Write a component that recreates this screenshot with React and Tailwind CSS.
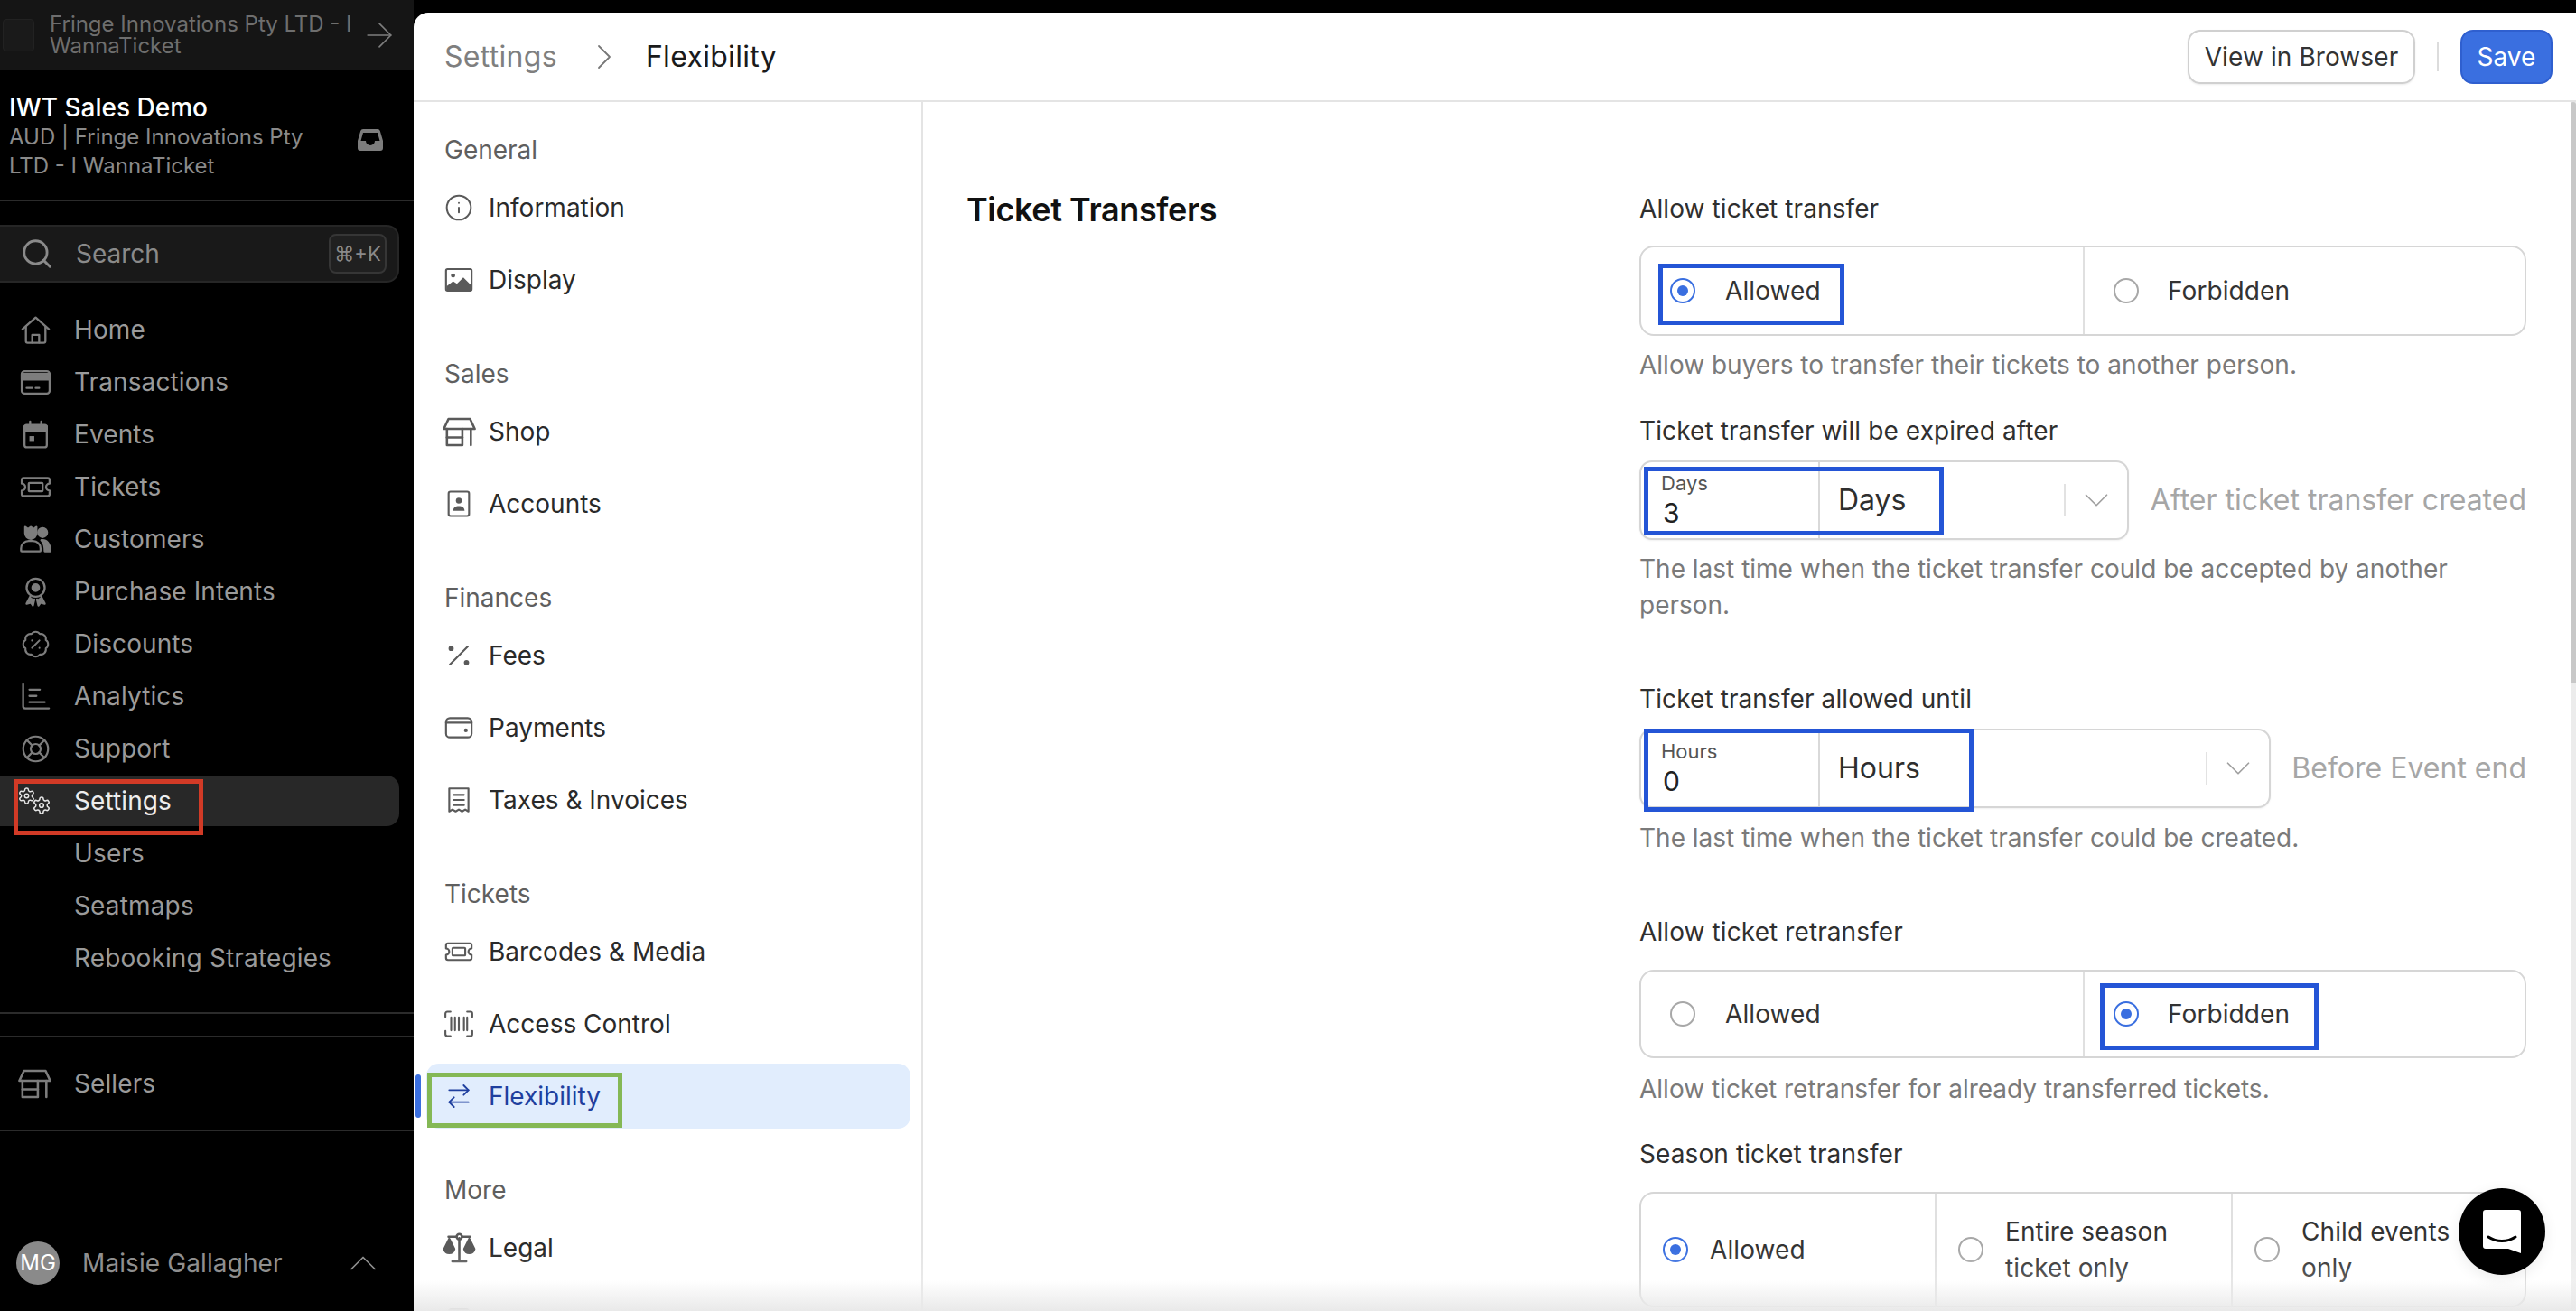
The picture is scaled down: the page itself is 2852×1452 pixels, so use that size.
import React from "react";
import { ArrowRight, Search, ChevronUp, ChevronRight, ChevronDown, BadgePercent, LifeBuoy, ArrowRightLeft, Info } from "lucide-react";

const S = ({ size = 34, children, className = "", sw = 1.5 }) => (
  <svg width={size} height={size} viewBox="0 0 24 24" fill="none" stroke="currentColor" strokeWidth={sw} strokeLinecap="round" strokeLinejoin="round" className={"shrink-0 " + className}>{children}</svg>
);

const GEAR = "M12.22 2h-.44a2 2 0 0 0-2 2v.18a2 2 0 0 1-1 1.73l-.43.25a2 2 0 0 1-2 0l-.15-.08a2 2 0 0 0-2.73.73l-.22.38a2 2 0 0 0 .73 2.73l.15.1a2 2 0 0 1 1 1.72v.51a2 2 0 0 1-1 1.74l-.15.09a2 2 0 0 0-.73 2.73l.22.38a2 2 0 0 0 2.73.73l.15-.08a2 2 0 0 1 2 0l.43.25a2 2 0 0 1 1 1.73V20a2 2 0 0 0 2 2h.44a2 2 0 0 0 2-2v-.18a2 2 0 0 1 1-1.73l.43-.25a2 2 0 0 1 2 0l.15.08a2 2 0 0 0 2.73-.73l.22-.39a2 2 0 0 0-.73-2.73l-.15-.08a2 2 0 0 1-1-1.74v-.5a2 2 0 0 1 1-1.74l.15-.09a2 2 0 0 0 .73-2.73l-.22-.38a2 2 0 0 0-2.73-.73l-.15.08a2 2 0 0 1-2 0l-.43-.25a2 2 0 0 1-1-1.73V4a2 2 0 0 0-2-2z";

const HomeI = (p) => <S {...p}><path d="M2.500 11.500 12 3l9.500 8.500" /><path d="M5 9.500V20a1.200 1.200 0 0 0 1.200 1.200h11.600A1.200 1.200 0 0 0 19 20V9.500" /><path d="M9.500 21v-5.500h5V21" /></S>;
const CardI = (p) => <S {...p}><rect x="2" y="4" width="20" height="16" rx="2" /><path d="M2 6h20v4H2z" fill="currentColor" /><path d="M5.500 16h4M12 16h2.500" /></S>;
const CalI = (p) => <S {...p}><rect x="4" y="5" width="16" height="16" rx="1.600" /><path d="M4 6h16v3.500H4z" fill="currentColor" /><path d="M8 2.500V5M16 2.500V5" /><rect x="7.500" y="13" width="3.500" height="3.500" fill="currentColor" stroke="none" /></S>;
const TicketI = (p) => <S {...p}><path d="M3.500 5.500h17a1.500 1.500 0 0 1 1.500 1.500v2.500a2.500 2.500 0 0 0 0 5V17a1.500 1.500 0 0 1-1.500 1.500h-17A1.500 1.500 0 0 1 2 17v-2.500a2.500 2.500 0 0 0 0-5V7a1.500 1.500 0 0 1 1.500-1.500z" /><rect x="7" y="9" width="10" height="6" rx="0.600" /></S>;
const CustomersI = (p) => <S {...p}><path d="M4.500 3l2 1.500L8.500 3l2 1.500L12.500 3v4.500a4 4 0 0 1-8 0z" fill="currentColor" /><path d="M1.500 20v-1.500A5.500 5.500 0 0 1 7 13h3a5.500 5.500 0 0 1 5.500 5.500V20a.5.5 0 0 1-.5.5H2a.5.5 0 0 1-.5-.5z" /><circle cx="17" cy="7" r="3.200" fill="currentColor" /><path d="M16 12.500c4 -.5 6.500 2.500 6.500 8h-4c0-3-.5-6-2.500-8z" fill="currentColor" /></S>;
const RosetteI = (p) => <S {...p}><circle cx="12" cy="9" r="6.500" /><circle cx="12" cy="9" r="2.400" fill="currentColor" /><path d="M8 15.500l-2.500 5 3-.8 1.500 2 1-4.200M16 15.500l2.500 5-3-.8-1.500 2-1-4.200" fill="currentColor" /></S>;
const ChartI = (p) => <S {...p}><path d="M3 3v16a1.500 1.500 0 0 0 1.500 1.500H21.500" /><path d="M7.500 7h7.500M7.500 11.500h5M7.500 16h11" /></S>;
const GearsI = () => (
  <svg width="36" height="30" viewBox="0 0 36 30" fill="none" stroke="currentColor" strokeWidth="1.700" strokeLinejoin="round" className="shrink-0 overflow-visible">
    <g transform="translate(-0.700,-0.700) scale(0.85)"><path d={GEAR} /><circle cx="12" cy="12" r="2.600" /></g>
    <g transform="translate(15.200,9.200) scale(0.9)"><path d={GEAR} /><circle cx="12" cy="12" r="2.600" /></g>
  </svg>
);
const StoreI = () => <S size={41}><path d="M5 3.500h14l3 6.500H2z" /><path d="M4 10v10.500h10V10M19.500 10v10.500" /><path d="M4 15.500h10" /></S>;
const ImageI = (p) => <S {...p}><rect x="2" y="3.500" width="20" height="17" rx="1.200" /><circle cx="7.500" cy="8.500" r="1.700" fill="currentColor" stroke="none" /><path d="M2.500 20v-3l5-4 3 2 5-5 6 6v4z" fill="currentColor" stroke="none" /></S>;
const AccountI = (p) => <S {...p}><rect x="4" y="2.500" width="16" height="19" rx="1.500" /><circle cx="12" cy="9.500" r="2.300" fill="currentColor" stroke="none" /><path d="M7.500 17.500c0-2.500 2-3.800 4.500-3.800s4.500 1.300 4.500 3.800z" fill="currentColor" stroke="none" /></S>;
const FeesI = (p) => <S {...p}><path d="M19 5 5 19" /><circle cx="6" cy="6.500" r="1.300" fill="currentColor" /><circle cx="18" cy="17.500" r="1.300" fill="currentColor" /></S>;
const WalletI = (p) => <S {...p}><rect x="2" y="4.500" width="20" height="15" rx="3" /><path d="M2 8h20" /><circle cx="17.500" cy="14" r="0.800" fill="currentColor" /></S>;
const ReceiptI = (p) => <S {...p}><path d="M4.500 3h15v18l-2.500-1.500-2.500 1.500-2.500-1.500L9.500 21 7 19.500 4.500 21z" /><path d="M8 8h8M8 12h8M8 16h8" /></S>;
const ScanI = (p) => <S {...p}><path d="M1.500 6.500V4A1.500 1.500 0 0 1 3 2.500h2.500M18.500 2.500H21A1.500 1.500 0 0 1 22.500 4v2.500M22.500 17.500V20a1.500 1.500 0 0 1-1.500 1.500h-2.500M5.500 21.500H3A1.500 1.500 0 0 1 1.500 20v-2.500" /><path d="M6 7v10M9 7v10M12 7v10M16 7v10M18.500 7v10" /></S>;
const ScaleI = () => (
  <S size={41}>
    <path d="M12 5.500V20M5 4.500h4.800M14.200 4.500H19M7.500 20.500h9" />
    <circle cx="12" cy="4.500" r="1.700" />
    <path d="M5.500 6 2.300 12.500a3.300 3.300 0 0 0 6.400 0z" fill="currentColor" />
    <path d="M18.500 6l-3.200 6.500a3.300 3.300 0 0 0 6.400 0z" fill="currentColor" />
  </S>
);
const InboxFill = () => (
  <svg width="28" height="24" viewBox="0 0 28 24" className="shrink-0"><path fillRule="evenodd" fill="#7d7d7d" d="M6 0h16a3 3 0 0 1 2.800 2L28 13v8a3 3 0 0 1-3 3H3a3 3 0 0 1-3-3v-8L3.200 2A3 3 0 0 1 6 0zM6 4l-2.500 9h5.500a5 5 0 0 0 10 0h5.500L22 4z" /></svg>
);

const sideItems = [
  [HomeI, "Home"], [CardI, "Transactions"], [CalI, "Events"], [TicketI, "Tickets"],
  [CustomersI, "Customers"], [RosetteI, "Purchase Intents"],
  [() => <BadgePercent size={33} strokeWidth={1.5} />, "Discounts"], [ChartI, "Analytics"],
  [() => <LifeBuoy size={33} strokeWidth={1.6} />, "Support"],
];

function SideRow({ Icon, label }) {
  return (
    <div className="h-[58px] flex items-center pl-[15px] text-[#9a9a9a]">
      <div className="w-[48px] mr-[19px] flex justify-center text-[#7d7d7d] shrink-0"><Icon size={37} /></div>
      <span className="text-[28px] leading-[36px] tracking-[0.1px]">{label}</span>
    </div>
  );
}

function Sidebar() {
  return (
    <aside className="w-[458px] shrink-0 h-full bg-black flex flex-col overflow-hidden">
      <div className="h-[78px] bg-[#151515] flex items-center pl-[3px] pr-[16px] shrink-0">
        <div className="w-[35px] h-[36px] rounded-[4px] bg-[#1a1a1a] border border-[#222] shrink-0" />
        <div className="ml-[17px] flex-1 text-[24px] leading-[24px] text-[#6e6e6e] whitespace-nowrap">Fringe Innovations Pty LTD - I<br />WannaTicket</div>
        <ArrowRight size={44} strokeWidth={0.9} className="text-[#7d7d7d] shrink-0" />
      </div>
      <div className="h-[145px] shrink-0 border-b-2 border-[#2b2b2b] pl-[10px] pr-[34px] pt-[24px] flex items-center justify-between pb-[22px]">
        <div>
          <div className="text-[28px] leading-[34px] font-medium text-white">IWT Sales Demo</div>
          <div className="text-[24px] leading-[32px] text-[#8a8a8a] w-[340px]">AUD | Fringe Innovations Pty LTD - I WannaTicket</div>
        </div>
        <div className="mt-[8px]"><InboxFill /></div>
      </div>
      <div className="pr-[16px] pt-[26px] shrink-0">
        <div className="h-[64px] rounded-r-[14px] bg-[#191919] border-2 border-l-0 border-[#262626] flex items-center pl-[22px] pr-[12px]">
          <Search size={38} strokeWidth={1.8} className="text-[#8a8a8a]" />
          <span className="ml-[24px] flex-1 text-[28px] text-[#8a8a8a]">Search</span>
          <div className="w-[64px] h-[44px] rounded-[8px] border-2 border-[#363636] bg-[#202020] flex items-center justify-center text-[22px] text-[#8a8a8a] whitespace-nowrap">⌘+K</div>
        </div>
      </div>
      <div className="pt-[23px] shrink-0">
        {sideItems.map(([I, l]) => <SideRow key={l} Icon={I} label={l} />)}
        <div className="relative mr-[16px] pl-[20px] bg-[#282828] rounded-r-[14px] h-[56px] my-[1px] flex items-center">
          <div className="w-[62px] shrink-0 text-[#e6e6e6]"><GearsI /></div>
          <span className="text-[28px] text-[#ededed] leading-[36px] tracking-[0.1px]">Settings</span>
          <div className="absolute left-[15px] top-[4px] w-[210px] h-[62px] border-[5px] border-[#d13a26]" />
        </div>
        {["Users", "Seatmaps", "Rebooking Strategies"].map((l) => (
          <div key={l} className="h-[58px] flex items-center pl-[82px] text-[28px] text-[#9a9a9a] tracking-[0.15px]">{l}</div>
        ))}
      </div>
      <div className="mt-[31px] h-[28px] border-y-2 border-[#2b2b2b] shrink-0" />
      <div className="h-[104px] border-b-2 border-[#2b2b2b] pl-[18px] flex items-center shrink-0">
        <div className="w-[64px] shrink-0 text-[#7d7d7d]"><StoreI /></div>
        <span className="text-[28px] text-[#9a9a9a] tracking-[0.1px]">Sellers</span>
      </div>
      <div className="flex-1 flex items-end pb-[29px] pl-[18px]">
        <div className="w-[48px] h-[48px] rounded-full bg-[#8a8a8a] text-white text-[24px] flex items-center justify-center shrink-0">MG</div>
        <div className="ml-[25px] h-[48px] flex items-center w-[285px] text-[28px] text-[#8f8f8f] tracking-[0.1px]">Maisie Gallagher</div>
        <div className="h-[48px] flex items-center"><ChevronUp size={52} strokeWidth={0.8} className="text-[#8f8f8f]" /></div>
      </div>
    </aside>
  );
}

function NavRow({ Icon, label }) {
  return (
    <div className="h-[80px] flex items-center">
      <div className="w-[32px] mr-[17px] text-[#5a5a5a] flex justify-center"><Icon size={34} /></div>
      <span className="text-[28px] text-[#2a2a2a]">{label}</span>
    </div>
  );
}

const NavHead = ({ children, className = "" }) => <div className={"text-[28px] leading-[36px] text-[#5f5f5f] " + className}>{children}</div>;

function SettingsNav() {
  const Info34 = () => <Info size={34} strokeWidth={1.500} />;
  return (
    <nav className="relative w-[564px] shrink-0 h-full border-r-2 border-[#e4e4e4] pl-[34px] pt-[35px] overflow-hidden">
      <NavHead>General</NavHead>
      <div className="mt-[6px]"><NavRow Icon={Info34} label="Information" /><NavRow Icon={ImageI} label="Display" /></div>
      <NavHead className="mt-[46px]">Sales</NavHead>
      <div className="mt-[6px]"><NavRow Icon={StoreI} label="Shop" /><NavRow Icon={AccountI} label="Accounts" /></div>
      <NavHead className="mt-[46px]">Finances</NavHead>
      <div className="mt-[6px]"><NavRow Icon={FeesI} label="Fees" /><NavRow Icon={WalletI} label="Payments" /><NavRow Icon={ReceiptI} label="Taxes & Invoices" /></div>
      <NavHead className="mt-[46px]">Tickets</NavHead>
      <div className="mt-[6px]"><NavRow Icon={TicketI} label="Barcodes & Media" /><NavRow Icon={ScanI} label="Access Control" /></div>
      <div className="relative -ml-[20px] mr-[12px] h-[72px] mt-[4px] rounded-[14px] bg-[#e1edfd] flex items-center pl-[20px] text-[#1f3f9e]">
        <div className="w-[32px] mr-[17px] flex justify-center"><ArrowRightLeft size={36} strokeWidth={1.4} /></div>
        <span className="text-[28px]">Flexibility</span>
        <div className="absolute -left-[12px] top-[12px] w-[6px] h-[48px] rounded-full bg-[#3a6fe0]" />
        <div className="absolute left-[1px] top-[10px] w-[216px] h-[61px] border-[5px] border-[#84b855]" />
      </div>
      <NavHead className="mt-[50px]">More</NavHead>
      <div className="mt-[6px]"><NavRow Icon={ScaleI} label="Legal" /></div>
      <div className="h-[80px] flex items-center">
        <div className="w-[26px] h-[26px] ml-[3px] mr-[20px] bg-[#5a5a5a] rounded-[5px]" />
        <div className="w-[14px] h-[22px] bg-[#5a5a5a] rounded-[2px]" />
      </div>
    </nav>
  );
}

const Radio = ({ on }) => on ? (
  <span className="w-[28px] h-[28px] rounded-full border-2 border-[#3a6fe0] flex items-center justify-center shrink-0"><span className="w-[12px] h-[12px] rounded-full bg-[#3a6fe0]" /></span>
) : <span className="w-[28px] h-[28px] rounded-full border-2 border-[#a8a8a8] shrink-0" />;

const Label = ({ children, className = "" }) => <div className={"text-[28px] leading-[36px] text-[#2f2f2f] tracking-[0.1px] " + className}>{children}</div>;
const Help = ({ children, className = "" }) => <div className={"text-[28px] leading-[40px] text-[#7a7a7a] " + className}>{children}</div>;

function RadioTwo({ selected, box }) {
  return (
    <div className="relative h-full grid grid-cols-2 border-2 border-[#d6d6d6] rounded-[16px] bg-white">
      {["Allowed", "Forbidden"].map((t, i) => (
        <div key={t} className={"flex items-center pl-[32px] " + (i ? "border-l-2 border-[#e0e0e0]" : "")}>
          <Radio on={selected === i} />
          <span className={(i ? "ml-[32px]" : "ml-[33px]") + " text-[28px] text-[#333] tracking-[0.1px]"}>{t}</span>
        </div>
      ))}
      {box}
    </div>
  );
}

function NumField({ unit, value, width, tail, box }) {
  return (
    <div className="flex items-center h-full">
      <div className={"relative h-full flex border-2 border-[#d6d6d6] rounded-[14px] bg-white shadow-[0_1px_2px_rgba(0,0,0,0.06)] " + width}>
        <div className="w-[198px] shrink-0 border-r-2 border-[#d9d9d9] pl-[22px] pt-[9px]">
          <div className="text-[22px] leading-[28px] text-[#555]">{unit}</div>
          <div className="text-[30px] leading-[38px] text-[#222] pl-[2px]">{value}</div>
        </div>
        <div className="flex-1 flex items-center pl-[20px] text-[32px] text-[#2f2f2f]">{unit}</div>
        <div className="w-[2px] h-[36px] bg-[#e2e2e2] self-center" />
        <div className="w-[68px] flex items-center justify-center"><ChevronDown size={46} strokeWidth={0.9} className="text-[#a0a0a0]" /></div>
        {box}
      </div>
      <div className="flex-1 text-right text-[32px] text-[#a6a6a6] whitespace-nowrap">{tail}</div>
    </div>
  );
}

function SeasonRow() {
  return (
    <div className="h-[128px] grid grid-cols-[325px_328px_1fr] border-2 border-[#d6d6d6] rounded-[16px] bg-white">
      <div className="flex items-center pl-[24px]"><Radio on /><span className="ml-[24px] text-[28px] text-[#333] tracking-[0.1px]">Allowed</span></div>
      <div className="flex items-center pl-[24px] border-l-2 border-[#e0e0e0]"><Radio /><span className="ml-[24px] text-[28px] leading-[40px] text-[#333] tracking-[0.1px]">Entire season<br />ticket only</span></div>
      <div className="flex items-center pl-[24px] border-l-2 border-[#e0e0e0]"><Radio /><span className="ml-[24px] text-[28px] leading-[40px] text-[#333] tracking-[0.1px]">Child events<br />only</span></div>
    </div>
  );
}

const BLUE = "absolute border-[5px] border-[#2455d6]";

function Content() {
  return (
    <section className="relative flex-1 h-full flex overflow-hidden pr-[55px]">
      <div className="w-[793px] shrink-0 pl-[48px] pt-[96px]">
        <h2 className="text-[36px] leading-[46px] font-semibold text-[#111] tracking-[-0.4px]">Ticket Transfers</h2>
      </div>
      <div className="flex-1 pt-[100px]">
        <Label>Allow ticket transfer</Label>
        <div className="mt-[23px] h-[100px]">
          <RadioTwo selected={0} box={<div className={BLUE + " left-[19px] top-[18px] w-[206px] h-[68px]"} />} />
        </div>
        <Help className="mt-[12px]">Allow buyers to transfer their tickets to another person.</Help>
        <Label className="mt-[35px]">Ticket transfer will be expired after</Label>
        <div className="mt-[15px] h-[88px]">
          <NumField unit="Days" value="3" width="w-[542px]" tail="After ticket transfer created"
            box={<div className={BLUE + " left-[3px] top-[5px] w-[332px] h-[76px]"} />} />
        </div>
        <Help className="mt-[12px] w-[960px]">The last time when the ticket transfer could be accepted by another person.</Help>
        <Label className="mt-[66px]">Ticket transfer allowed until</Label>
        <div className="mt-[15px] h-[88px]">
          <NumField unit="Hours" value="0" width="w-[699px]" tail="Before Event end"
            box={<div className={BLUE + " left-[3px] -top-[2px] w-[365px] h-[92px]"} />} />
        </div>
        <Help className="mt-[13px]">The last time when the ticket transfer could be created.</Help>
        <Label className="mt-[66px]">Allow ticket retransfer</Label>
        <div className="mt-[24px] h-[98px]">
          <RadioTwo selected={1} box={<div className={BLUE + " left-[508px] top-[13px] w-[242px] h-[74px]"} />} />
        </div>
        <Help className="mt-[14px]">Allow ticket retransfer for already transferred tickets.</Help>
        <Label className="mt-[34px]">Season ticket transfer</Label>
        <div className="mt-[24px]"><SeasonRow /></div>
      </div>
    </section>
  );
}

export default function App() {
  return (
    <div className="relative w-[2852px] h-[1452px] bg-black flex overflow-hidden font-['Inter',sans-serif]">
      <Sidebar />
      <main className="relative flex-1 mt-[14px] h-[1438px] rounded-tl-[16px] bg-white flex flex-col overflow-hidden">
        <header className="h-[99px] shrink-0 border-b-2 border-[#e4e4e4] flex items-center pl-[34px] pr-[26px]">
          <span className="text-[32px] text-[#7f7f7f] tracking-[0.3px]">Settings</span>
          <ChevronRight size={48} strokeWidth={0.9} className="ml-[28px] text-[#777]" />
          <span className="ml-[22px] text-[32px] text-[#1a1a1a] tracking-[0.3px]">Flexibility</span>
          <div className="flex-1" />
          <div className="h-[60px] w-[252px] rounded-[14px] border-2 border-[#d0d0d0] shadow-[0_1px_2px_rgba(0,0,0,0.08)] flex items-center justify-center text-[28px] text-[#333] tracking-[0.1px]">View in Browser</div>
          <div className="w-[2px] h-[32px] bg-[#dcdcdc] mx-[24px]" />
          <div className="h-[60px] w-[102px] rounded-[14px] bg-[#3a6fe0] border-2 border-[#2f5fcf] flex items-center justify-center text-[28px] text-white">Save</div>
        </header>
        <div className="flex-1 min-h-0 flex">
          <SettingsNav />
          <Content />
        </div>
        <div className="absolute right-0 top-[99px] bottom-0 w-[6px] bg-[#ececec]">
          <div className="h-[643px] w-full bg-[#c8c8c8] rounded-t-[3px]" />
        </div>
        <div className="absolute inset-x-0 bottom-0 h-[68px] bg-gradient-to-b from-white/0 via-white/20 to-[#e9e9e9] pointer-events-none" />
        <div className="absolute left-[2264px] top-[1302px] w-[96px] h-[96px] rounded-full bg-black flex items-center justify-center shadow-[0_4px_16px_rgba(0,0,0,0.08)]">
          <svg width="42" height="48" viewBox="0 0 42 48"><path fill="white" d="M3 0h36a3 3 0 0 1 3 3v45l-14-5H3a3 3 0 0 1-3-3V3a3 3 0 0 1 3-3z" /><path d="M6 30c9 6 21 6 30 0" fill="none" stroke="black" strokeWidth="3" strokeLinecap="round" /></svg>
        </div>
      </main>
    </div>
  );
}
